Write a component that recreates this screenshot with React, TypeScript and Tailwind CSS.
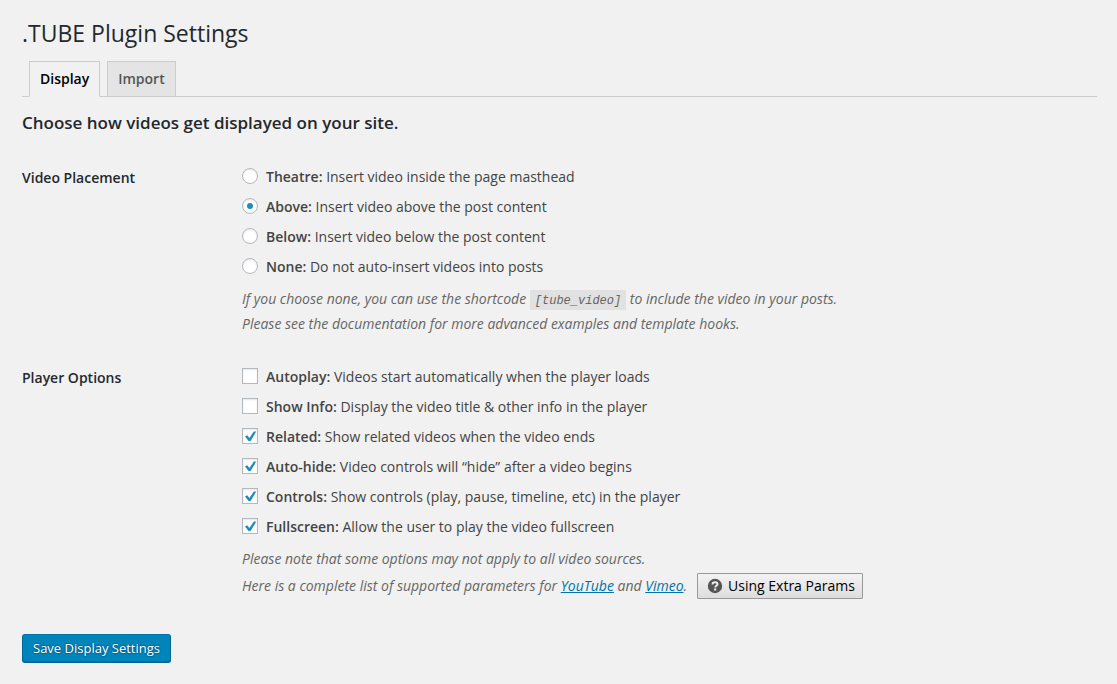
import { useState, type ReactNode } from "react";

type Option = { id: string; name: string; text: string };

const placements: Option[] = [
  { id: "theatre", name: "Theatre:", text: "Insert video inside the page masthead" },
  { id: "above", name: "Above:", text: "Insert video above the post content" },
  { id: "below", name: "Below:", text: "Insert video below the post content" },
  { id: "none", name: "None:", text: "Do not auto-insert videos into posts" },
];

const playerOptions: Option[] = [
  { id: "autoplay", name: "Autoplay:", text: "Videos start automatically when the player loads" },
  { id: "showinfo", name: "Show Info:", text: "Display the video title & other info in the player" },
  { id: "related", name: "Related:", text: "Show related videos when the video ends" },
  { id: "autohide", name: "Auto-hide:", text: "Video controls will “hide” after a video begins" },
  { id: "controls", name: "Controls:", text: "Show controls (play, pause, timeline, etc) in the player" },
  { id: "fullscreen", name: "Fullscreen:", text: "Allow the user to play the video fullscreen" },
];

function OptionLabel({ option, children }: { option: Option; children: ReactNode }) {
  return (
    <label className="flex h-[30px] items-start gap-2 pt-1.5">
      {children}
      <span className="leading-[17px]">
        <strong className="font-semibold">{option.name}</strong> {option.text}
      </span>
    </label>
  );
}

function FieldGroup({ title, children }: { title: string; children: ReactNode }) {
  return (
    <fieldset className="flex min-w-0">
      <legend className="float-left w-[220px] shrink-0 pt-1.5 font-semibold leading-5 text-[#23282d]">
        {title}
      </legend>
      <div className="min-w-0 flex-1">{children}</div>
    </fieldset>
  );
}

export default function App() {
  const [placement, setPlacement] = useState("above");
  const [enabled, setEnabled] = useState<string[]>(["related", "autohide", "controls", "fullscreen"]);

  const toggle = (id: string) =>
    setEnabled((list) => (list.includes(id) ? list.filter((item) => item !== id) : [...list, id]));

  return (
    <main className="min-h-screen bg-[#f1f1f1] pr-5 pb-5 pl-[22px] pt-[17px] font-['Open_Sans',sans-serif] text-sm text-[#444]">
      <h1 className="text-[23px] leading-8 font-normal text-[#23282d]">.TUBE Plugin Settings</h1>

      <nav className="mt-3 flex items-end gap-[7px] border-b border-[#ccc] pl-[7px]">
        <a
          href="#display"
          className="-mb-px border border-b-[#f1f1f1] border-[#ccc] bg-[#f1f1f1] px-2.5 pt-[5px] pb-[5px] leading-6 font-semibold text-black"
        >
          Display
        </a>
        <a
          href="#import"
          className="border border-b-0 border-[#ccc] bg-[#e4e4e4] px-2.5 pt-[5px] pb-[5px] leading-6 font-semibold text-[#555]"
        >
          Import
        </a>
      </nav>

      <form onSubmit={(event) => event.preventDefault()}>
        <h2 className="mt-[14px] text-[17px] leading-6 font-semibold text-[#23282d]">
          Choose how videos get displayed on your site.
        </h2>

        <div className="mt-[27px]">
          <FieldGroup title="Video Placement">
            {placements.map((option) => (
              <OptionLabel key={option.id} option={option}>
                <input
                  type="radio"
                  name="placement"
                  checked={placement === option.id}
                  onChange={() => setPlacement(option.id)}
                  className="grid size-4 shrink-0 appearance-none place-items-center rounded-full border border-[#b4b9be] bg-white shadow-[inset_0_1px_2px_rgba(0,0,0,0.1)] before:size-1.5 before:rounded-full checked:before:bg-[#1e8cbe] checked:before:content-['']"
                />
              </OptionLabel>
            ))}
            <p className="mt-1 leading-[25px] text-[#666] italic">
              If you choose none, you can use the shortcode{" "}
              <code className="bg-[#e1e1e1] px-[5px] pt-1 pb-0.5 font-['Liberation_Mono',monospace] text-xs">
                [tube_video]
              </code>{" "}
              to include the video in your posts.
              <br />
              Please see the documentation for more advanced examples and template hooks.
            </p>
          </FieldGroup>
        </div>

        <div className="mt-[26px]">
          <FieldGroup title="Player Options">
            {playerOptions.map((option) => (
              <OptionLabel key={option.id} option={option}>
                <span className="relative grid size-4 shrink-0">
                  <input
                    type="checkbox"
                    checked={enabled.includes(option.id)}
                    onChange={() => toggle(option.id)}
                    className="peer size-4 appearance-none border border-[#b4b9be] bg-white shadow-[inset_0_1px_2px_rgba(0,0,0,0.1)]"
                  />
                  <svg
                    viewBox="0 0 16 16"
                    aria-hidden="true"
                    className="pointer-events-none absolute inset-0 hidden size-4 fill-[#1e8cbe] peer-checked:block"
                  >
                    <path d="M3 8.4 5.2 7.2 7.4 10 11.8 3.6 14.2 3.6 8.6 13 6.6 13Z" />
                  </svg>
                </span>
              </OptionLabel>
            ))}
            <div className="mt-1 text-[#666] italic">
              <p className="leading-[26px]">Please note that some options may not apply to all video sources.</p>
              <div className="mt-px flex items-center gap-2.5">
                <p className="leading-[26px]">
                  Here is a complete list of supported parameters for{" "}
                  <a href="#youtube" className="text-[#0073aa] underline">
                    YouTube
                  </a>{" "}
                  and{" "}
                  <a href="#vimeo" className="text-[#0073aa] underline">
                    Vimeo
                  </a>
                  .
                </p>
                <button
                  type="button"
                  className="flex h-[26px] items-center gap-[5px] rounded-[1px] border border-[#999] bg-linear-to-b from-[#f3f3f3] to-[#dddddd] pr-[7px] pl-[9px] text-black not-italic"
                >
                  <svg viewBox="0 0 16 16" aria-hidden="true" className="size-4">
                    <circle cx="8" cy="8" r="7.2" fill="#555" />
                    <path
                      d="M5.5 6.4C5.5 4.8 6.5 4.2 8 4.2S10.5 5 10.5 6.2C10.5 7.9 8.2 7.7 8.2 9.6"
                      fill="none"
                      stroke="#eee"
                      strokeWidth="1.9"
                    />
                    <path d="M7.1 10.5H9.2V12.5H7.1Z" fill="#eee" />
                  </svg>
                  Using Extra Params
                </button>
              </div>
            </div>
          </FieldGroup>
        </div>

        <button
          type="submit"
          className="mt-[35px] h-[29px] rounded-[3px] border border-[#006799] border-t-[#0073aa] bg-[#0085ba] px-2.5 text-[13px] text-white shadow-[inset_0_-1px_0_#006799] [text-shadow:0_-1px_1px_#006799,1px_0_1px_#006799,0_1px_1px_#006799,-1px_0_1px_#006799]"
        >
          Save Display Settings
        </button>
      </form>
    </main>
  );
}
